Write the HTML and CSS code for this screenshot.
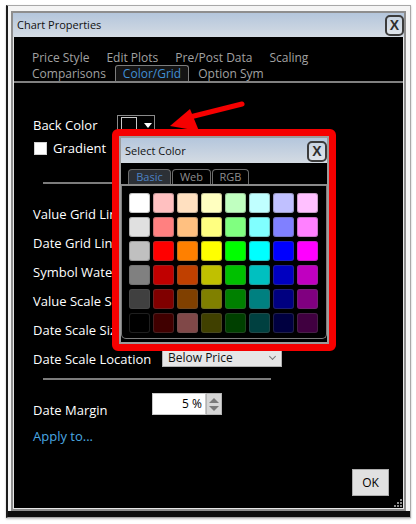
FILE: index.html
```html
<!DOCTYPE html>
<html>
<head>
<meta charset="utf-8">
<title>Chart Properties</title>
<link rel="stylesheet" href="styles.css">
</head>
<body>
<div class="screen">
  <div class="dialog">
    <div class="titlebar">
      <span class="title">Chart Properties</span>
      <span class="closebtn">X</span>
    </div>
    <div class="dbody">
      <div class="tabs">
        <div class="tabrow">
          <span class="tab">Price Style</span>
          <span class="tab">Edit Plots</span>
          <span class="tab">Pre/Post Data</span>
          <span class="tab">Scaling</span>
        </div>
        <div class="tabrow">
          <span class="tab">Comparisons</span>
          <span class="tab active">Color/Grid</span>
          <span class="tab">Option Sym</span>
        </div>
      </div>
      <div class="content">
        <div class="row row-back">
          <span class="label label-back">Back Color</span>
          <span class="colorbtn"><span class="cswatch"></span><span class="tri"></span></span>
        </div>
        <div class="row row-grad">
          <span class="checkbox"></span>
          <span class="label">Gradient</span>
        </div>
        <div class="sep sep-1"></div>
        <div class="row row-item row-first"><span class="label">Value Grid Lines</span></div>
        <div class="row row-item"><span class="label">Date Grid Lines</span></div>
        <div class="row row-item"><span class="label">Symbol Watermark</span></div>
        <div class="row row-item"><span class="label">Value Scale Size</span></div>
        <div class="row row-item"><span class="label">Date Scale Size</span></div>
        <div class="row row-item">
          <span class="label label-loc">Date Scale Location</span>
          <span class="select">Below Price<span class="chev"></span></span>
        </div>
        <div class="sep sep-2"></div>
        <div class="row row-margin">
          <span class="label label-margin">Date Margin</span>
          <span class="numbox">5 %</span>
          <span class="spinner"><span class="up"></span><span class="down"></span></span>
        </div>
        <div class="apply">Apply to...</div>
      </div>
      <div class="footer"><span class="okbtn">OK</span></div>
      <svg class="grip" width="10" height="10" viewBox="0 0 10 10">
        <rect x="7" y="1" width="2" height="2" fill="#8c8c8c"/>
        <rect x="4" y="4" width="2" height="2" fill="#8c8c8c"/>
        <rect x="7" y="4" width="2" height="2" fill="#8c8c8c"/>
        <rect x="1" y="7" width="2" height="2" fill="#8c8c8c"/>
        <rect x="4" y="7" width="2" height="2" fill="#8c8c8c"/>
        <rect x="7" y="7" width="2" height="2" fill="#8c8c8c"/>
      </svg>
    </div>
  </div>
</div>

<svg class="arrow" width="416" height="524" viewBox="0 0 416 524">
  <line x1="242" y1="104" x2="186" y2="118" stroke="#f60000" stroke-width="5" stroke-linecap="round"/>
  <polygon points="170,126 190,109 199,131" fill="#f60000"/>
</svg>

<div class="popup">
  <div class="sc">
    <div class="sc-title">
      <span class="title">Select Color</span>
      <span class="closebtn small">X</span>
    </div>
    <div class="sc-body">
      <div class="sc-tabs">
        <span class="sctab active tab-basic">Basic</span>
        <span class="sctab tab-web">Web</span>
        <span class="sctab tab-rgb">RGB</span>
      </div>
      <div class="grid-wrap">
        <div class="grid">
          <span class="sw" style="background:#ffffff"></span>
          <span class="sw" style="background:#ffc0c0"></span>
          <span class="sw" style="background:#ffe0c0"></span>
          <span class="sw" style="background:#ffffc0"></span>
          <span class="sw" style="background:#c0ffc0"></span>
          <span class="sw" style="background:#c0ffff"></span>
          <span class="sw" style="background:#c0c0ff"></span>
          <span class="sw" style="background:#ffc0ff"></span>

          <span class="sw" style="background:#e0e0e0"></span>
          <span class="sw" style="background:#ff8080"></span>
          <span class="sw" style="background:#ffc080"></span>
          <span class="sw" style="background:#ffff80"></span>
          <span class="sw" style="background:#80ff80"></span>
          <span class="sw" style="background:#80ffff"></span>
          <span class="sw" style="background:#8080ff"></span>
          <span class="sw" style="background:#ff80ff"></span>

          <span class="sw" style="background:#c0c0c0"></span>
          <span class="sw" style="background:#ff0000"></span>
          <span class="sw" style="background:#ff8000"></span>
          <span class="sw" style="background:#ffff00"></span>
          <span class="sw" style="background:#00ff00"></span>
          <span class="sw" style="background:#00ffff"></span>
          <span class="sw" style="background:#0000ff"></span>
          <span class="sw" style="background:#ff00ff"></span>

          <span class="sw" style="background:#808080"></span>
          <span class="sw" style="background:#c00000"></span>
          <span class="sw" style="background:#c04000"></span>
          <span class="sw" style="background:#c0c000"></span>
          <span class="sw" style="background:#00c000"></span>
          <span class="sw" style="background:#00c0c0"></span>
          <span class="sw" style="background:#0000c0"></span>
          <span class="sw" style="background:#c000c0"></span>

          <span class="sw" style="background:#404040"></span>
          <span class="sw" style="background:#800000"></span>
          <span class="sw" style="background:#804000"></span>
          <span class="sw" style="background:#808000"></span>
          <span class="sw" style="background:#008000"></span>
          <span class="sw" style="background:#008080"></span>
          <span class="sw" style="background:#000080"></span>
          <span class="sw" style="background:#800080"></span>

          <span class="sw" style="background:#000000"></span>
          <span class="sw" style="background:#400000"></span>
          <span class="sw" style="background:#804848"></span>
          <span class="sw" style="background:#404000"></span>
          <span class="sw" style="background:#004000"></span>
          <span class="sw" style="background:#004040"></span>
          <span class="sw" style="background:#000040"></span>
          <span class="sw" style="background:#400040"></span>
        </div>
      </div>
    </div>
  </div>
</div>
</body>
</html>
```

FILE: styles.css
```css
* { box-sizing: border-box; }

body {
  margin: 0;
  width: 416px;
  height: 524px;
  overflow: hidden;
  position: relative;
  background: #ffffff;
  font-family: "Open Sans", "Noto Sans", sans-serif;
}

.screen {
  margin: 5px 0 0 6px;
  width: 405px;
  height: 513px;
  border: 1px solid #a8a8a8;
  border-left: 2px solid #1c1c1c;
  padding: 5px 4px 6px 3px;
  background: linear-gradient(to bottom, #f4f4f4 0, #f4f4f4 calc(100% - 6px), #0e0e0e calc(100% - 6px));
  box-shadow: 0 1px 2px rgba(0,0,0,0.25);
}

.dialog {
  width: 395px;
  height: 500px;
  border: 2px solid #8e8e8e;
  background: #000;
  display: flex;
  flex-direction: column;
}

.titlebar {
  height: 24px;
  flex: none;
  background: linear-gradient(to bottom, #b4c6dc, #d4dbe3);
  display: flex;
  align-items: center;
  justify-content: space-between;
  padding: 0 0 0 4px;
}

.title {
  font-size: 11px;
  color: #111;
  line-height: 14px;
}

.closebtn {
  width: 19px;
  height: 21px;
  border: 2px solid #3c3c3c;
  border-radius: 5px;
  background: linear-gradient(to bottom, #c8d4e2, #dfe4ea);
  color: #2e2e2e;
  font-family: "Liberation Sans", Arial, sans-serif;
  font-weight: bold;
  font-size: 14px;
  line-height: 17px;
  text-align: center;
}

.closebtn.small {
  width: 20px;
  height: 21px;
  margin-top: 2px;
}

.dbody {
  flex: 1;
  border: 1px solid #e6e6e6;
  border-top: none;
  position: relative;
  display: flex;
  flex-direction: column;
}

.tabs {
  padding-top: 12px;
  border-bottom: 2px solid #808080;
}

.tabrow {
  display: flex;
  gap: 1px;
  padding-left: 10px;
}

.tab {
  font-size: 12px;
  line-height: 15px;
  padding: 0 7px;
  border: 1px solid transparent;
  border-bottom: none;
  color: #a2a2a2;
  white-space: nowrap;
}

.tab.active {
  border-color: #7c7c7c;
  border-radius: 3px 3px 0 0;
  background: #141414;
  color: #4090d6;
}

.content {
  padding: 32px 0 0 19px;
  display: flex;
  flex-direction: column;
}

.row {
  display: flex;
  align-items: center;
  height: 20px;
}

.label {
  font-size: 13px;
  line-height: 20px;
  color: #ffffff;
  white-space: nowrap;
}

.label-back { width: 84px; }

.colorbtn {
  width: 38px;
  height: 20px;
  border: 1px solid #8a8a8a;
  display: flex;
  align-items: center;
  padding-left: 3px;
  gap: 7px;
}

.cswatch {
  width: 16px;
  height: 16px;
  border: 1px solid #c8c8c8;
  background: #000;
}

.tri {
  width: 0;
  height: 0;
  border-left: 4px solid transparent;
  border-right: 4px solid transparent;
  border-top: 5px solid #ffffff;
}

.row-grad { margin-top: 3px; }

.checkbox {
  width: 13px;
  height: 13px;
  margin-left: 1px;
  margin-right: 6px;
  background: #ffffff;
  border: 1px solid #d0d0d0;
}

.sep {
  height: 2px;
  width: 228px;
  margin-left: 10px;
  background: #7c7c7c;
}

.sep-1 { margin-top: 24px; }
.sep-2 { margin-top: 9px; }

.row-item { margin-top: 9px; }
.row-first { margin-top: 20px; }

.label-loc { width: 129px; }

.select {
  position: relative;
  width: 120px;
  height: 18px;
  margin-top: -2px;
  background: #e6e6e6;
  border: 1px solid #b0b0b0;
  font-size: 12px;
  line-height: 16px;
  padding-left: 5px;
  color: #111;
}

.chev {
  position: absolute;
  right: 6px;
  top: 4px;
  width: 5px;
  height: 5px;
  border-right: 1px solid #777;
  border-bottom: 1px solid #777;
  transform: rotate(45deg);
}

.row-margin {
  margin-top: 13px;
  height: 24px;
  align-items: flex-start;
}

.label-margin {
  width: 119px;
  margin-top: 7px;
}

.numbox {
  width: 54px;
  height: 22px;
  background: #ffffff;
  border: 1px solid #c8c8c8;
  font-size: 12px;
  line-height: 20px;
  text-align: right;
  padding-right: 3px;
  color: #000;
}

.spinner {
  width: 16px;
  height: 22px;
  background: #d6d6d6;
  border: 1px solid #b4b4b4;
  display: flex;
  flex-direction: column;
  align-items: center;
  justify-content: space-around;
  padding: 2px 0;
}

.up, .down {
  width: 0;
  height: 0;
  border-left: 5px solid transparent;
  border-right: 5px solid transparent;
}

.up { border-bottom: 5px solid #7a7a7a; }
.down { border-top: 5px solid #7a7a7a; }

.apply {
  margin-top: 10px;
  font-size: 13px;
  line-height: 18px;
  color: #4aa8e2;
}

.footer {
  margin-top: 24px;
  display: flex;
  justify-content: flex-end;
  padding-right: 14px;
}

.okbtn {
  width: 37px;
  height: 27px;
  background: #e1e1e1;
  border: 1px solid #adadad;
  color: #000;
  font-size: 12px;
  line-height: 25px;
  text-align: center;
}

.grip {
  position: absolute;
  right: 0;
  bottom: 0;
}

.arrow {
  position: absolute;
  left: 0;
  top: 0;
}

.popup {
  position: absolute;
  left: 112px;
  top: 129px;
  width: 224px;
  height: 222px;
  border: 7px solid #f60000;
  border-radius: 6px;
  background: #f60000;
}

.sc {
  width: 100%;
  height: 100%;
  border: 2px solid #9c9c9c;
  background: #000;
  display: flex;
  flex-direction: column;
}

.sc-title {
  height: 25px;
  flex: none;
  background: linear-gradient(to bottom, #b4c6dc, #d4dbe3);
  display: flex;
  align-items: center;
  justify-content: space-between;
  padding-left: 4px;
}

.sc-body {
  flex: 1;
  padding-top: 6px;
  display: flex;
  flex-direction: column;
}

.sc-tabs {
  display: flex;
  gap: 1px;
  padding-left: 7px;
  border-bottom: 2px solid #8a8a8a;
}

.sctab {
  height: 15px;
  font-size: 11px;
  line-height: 14px;
  text-align: center;
  color: #8e8e8e;
  border: 1px solid #6c6c6c;
  border-bottom: none;
  border-radius: 4px 4px 0 0;
}

.tab-basic { width: 43px; }
.tab-web { width: 39px; }
.tab-rgb { width: 37px; }

.sctab.active {
  background: #2c3036;
  color: #4c82c4;
}

.grid-wrap {
  height: 153px;
  border: 1px solid #7c7c7c;
  border-top: none;
  border-radius: 0 0 5px 5px;
  padding: 7px 0 0 7px;
}

.grid {
  display: grid;
  grid-template-columns: repeat(8, 21px);
  grid-auto-rows: 20px;
  column-gap: 3px;
  row-gap: 4px;
}

.sw {
  border-radius: 3px;
  box-shadow: inset 0 0 0 1px rgba(90, 90, 90, 0.35);
}
```
